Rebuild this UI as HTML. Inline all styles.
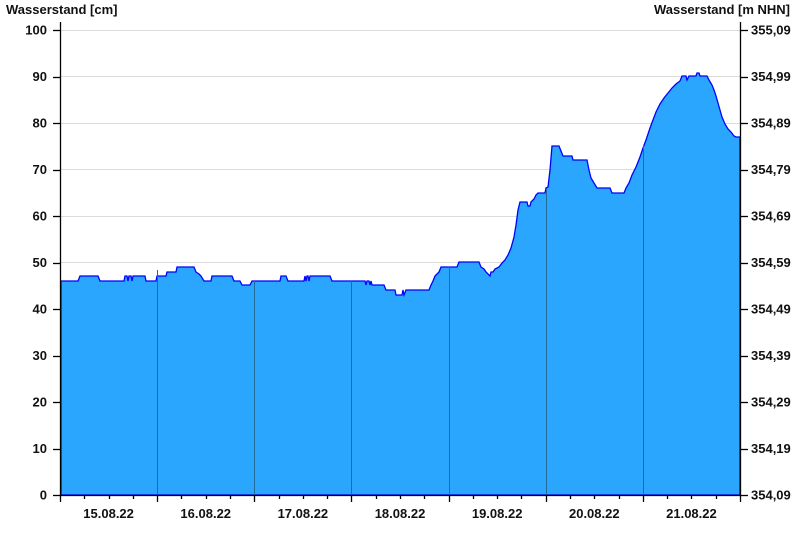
<!DOCTYPE html>
<html><head><meta charset="utf-8"><style>
html,body{margin:0;padding:0;background:#fff;width:800px;height:550px;overflow:hidden}
svg{display:block}
text{font-family:"Liberation Sans",Arial,sans-serif;font-weight:bold;font-size:13px;fill:#111}
</style></head><body>
<svg width="800" height="550" viewBox="0 0 800 550" xmlns="http://www.w3.org/2000/svg">
<g stroke="#dcdcdc" stroke-width="1">
<line x1="61" y1="30.5" x2="740" y2="30.5"/><line x1="61" y1="76.5" x2="740" y2="76.5"/><line x1="61" y1="123.5" x2="740" y2="123.5"/><line x1="61" y1="169.5" x2="740" y2="169.5"/><line x1="61" y1="216.5" x2="740" y2="216.5"/><line x1="61" y1="262.5" x2="740" y2="262.5"/><line x1="61" y1="309.5" x2="740" y2="309.5"/><line x1="61" y1="355.5" x2="740" y2="355.5"/><line x1="61" y1="402.5" x2="740" y2="402.5"/><line x1="61" y1="448.5" x2="740" y2="448.5"/>
</g>
<path id="d" fill="#2aa6fe" stroke="#0000ff" stroke-width="1.3" d=""/>
<g stroke="#1f6b9a" stroke-width="1">
<line x1="157.5" y1="270" x2="157.5" y2="495"/><line x1="254.5" y1="281" x2="254.5" y2="495"/><line x1="351.5" y1="281" x2="351.5" y2="495"/><line x1="449.5" y1="267" x2="449.5" y2="495"/><line x1="546.5" y1="190" x2="546.5" y2="495"/><line x1="643.5" y1="145" x2="643.5" y2="495"/>
</g>
<g stroke="#000" stroke-width="1.3" fill="none" id="ax">
<line x1="60.5" y1="22" x2="60.5" y2="496"/><line x1="740.5" y1="22" x2="740.5" y2="496"/><line x1="60" y1="495.5" x2="741" y2="495.5"/>
</g>
<text x="6" y="14">Wasserstand [cm]</text>
<text x="790" y="14" text-anchor="end">Wasserstand [m NHN]</text>
<g id="labs"></g>
</svg>
<script>
var P=[[61,281],[78,281],[80,276],[98,276],[100,281],[124,281],[125,276],[127,276],[128,281],[129,276],[131,276],[132,281],[133,276],[145,276],[146,281],[156,281],[157,276],[166,276],[167,272],[176,272],[177,267],[194,267],[196,272],[199,274],[201,276],[204,281],[211,281],[212,276],[232,276],[234,281],[240,281],[242,285],[250,285],[252,281],[280,281],[281,276],[286,276],[288,281],[304,281],[305,276],[306,281],[307,276],[308,276],[309,281],[310,276],[330,276],[332,281],[365,281],[366,285],[367,281],[369,281],[370,285],[371,281],[372,285],[384,285],[386,290],[395,290],[396,295],[402,295],[403,290],[404,295],[406,290],[429,290],[431,285],[433,281],[435,276],[437,274],[439,272],[441,267],[457,267],[459,262],[479,262],[481,267],[484,269],[486,272],[490,276],[491,272],[493,272],[495,269],[499,267],[502,263],[505,260],[508,255],[511,248],[514,237],[516,225],[518,210],[520,202],[527,202],[528,206],[530,206],[531,202],[534,199],[536,195],[538,193],[545,193],[546,188],[548,187],[550,170],[552,146],[559,146],[561,151],[563,156],[572,156],[573,160],[587,160],[589,170],[591,178],[594,183],[597,188],[610,188],[612,193],[624,193],[626,188],[629,183],[632,175],[636,167],[640,157],[643,148],[646,140],[650,128],[653,120],[656,112],[660,104],[664,98],[668,93],[672,88],[676,84],[680,81],[682,76],[686,76],[687,80],[689,76],[696,76],[697,73],[699,73],[700,76],[707,76],[709,80],[712,85],[714,90],[716,96],[718,103],[720,110],[722,117],[725,124],[728,129],[731,132],[734,136],[736,137],[740,137]];
var d="M61,495 ";P.forEach(function(p){d+="L"+p[0]+","+p[1]+" ";});d+="L740,495 Z";
document.getElementById('d').setAttribute('d',d);
var ns="http://www.w3.org/2000/svg",ax=document.getElementById('ax'),lb=document.getElementById('labs');
function el(t,a,txt,par){var e=document.createElementNS(ns,t);for(var k in a)e.setAttribute(k,a[k]);if(txt)e.textContent=txt;par.appendChild(e);}
var R=["354,09","354,19","354,29","354,39","354,49","354,59","354,69","354,79","354,89","354,99","355,09"];
for(var i=0;i<=10;i++){var y=495-i*46.5;var yy=Math.round(y)+0.5;
el('line',{x1:53,y1:yy,x2:61,y2:yy},null,ax);el('line',{x1:740,y1:yy,x2:748,y2:yy},null,ax);
el('text',{x:47,y:y+4.5,'text-anchor':'end'},String(i*10),lb);el('text',{x:751,y:y+4.5},R[i],lb);}
var days=["15.08.22","16.08.22","17.08.22","18.08.22","19.08.22","20.08.22","21.08.22"];
for(var k=0;k<=28;k++){var x=Math.round(60+k*680/28)+0.5;el('line',{x1:x,y1:495,x2:x,y2:(k%4==0?502:499)},null,ax);}
for(var j=0;j<7;j++){el('text',{x:60+j*97.14+48.6,y:518,'text-anchor':'middle'},days[j],lb);}
</script>
</body></html>
